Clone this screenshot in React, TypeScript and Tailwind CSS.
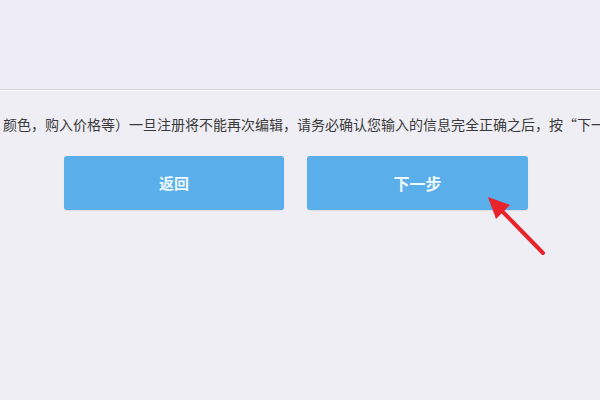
export default function App() {
  return (
    <div
      className="relative w-[600px] h-[400px] overflow-hidden bg-[#efeef5]"
      style={{ fontFamily: '"Noto Sans CJK SC", "Noto Sans", sans-serif' }}
    >
      <div className="h-[89px] bg-[#eeedf7]" />
      <div className="h-px bg-[#d3d3d9]" />
      <div className="h-px bg-white" />

      <p className="pt-[23px] pl-[3px] whitespace-nowrap text-[14px] leading-[20px] text-[#3a3a3a]">
        颜色，购入价格等）一旦注册将不能再次编辑，请务必确认您输入的信息完全正确之后，按“下一步”
      </p>

      <div className="mt-[22px] ml-[64px] flex gap-[23px]">
        <button className="w-[220px] h-[54px] rounded-[3px] bg-[#5aaeea] text-[15px] font-bold text-[#eef9fb] shadow-[0_1px_1px_rgba(0,0,0,0.08)]">
          返回
        </button>
        <button className="w-[221px] h-[54px] rounded-[3px] bg-[#5aaeea] text-[16px] font-bold text-[#eef9fb] shadow-[0_1px_1px_rgba(0,0,0,0.08)]">
          下一步
        </button>
      </div>

      {/* red pointer arrow */}
      <svg
        className="absolute left-0 top-0"
        width="600"
        height="400"
        viewBox="0 0 600 400"
      >
        <line
          x1="543"
          y1="253"
          x2="500"
          y2="209"
          stroke="#e8242a"
          strokeWidth="4"
          strokeLinecap="round"
        />
        <polygon points="488,197 510,205 496,219" fill="#e8242a" />
      </svg>
    </div>
  );
}
